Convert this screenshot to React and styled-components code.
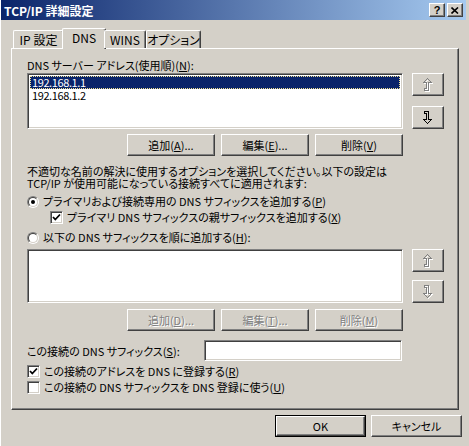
import React from 'react';
import styled, { createGlobalStyle } from 'styled-components';

const GlobalStyle = createGlobalStyle`
    html, body {
        margin: 0;
        padding: 0;
        background: #D4D0C8;
    }
    body {
        font-family: "Noto Sans CJK JP", "Liberation Sans", sans-serif;
        font-size: 11px;
        color: #000;
    }
`;

// 창 전체
const Window = styled.div`
    width: 469px;
    height: 446px;
    box-sizing: border-box;
    background: #D4D0C8;
    display: flex;
    flex-direction: column;
    padding: 0 3px 0 3px;
    border-left: 1px solid #fff;
    overflow: hidden;
    font-feature-settings: "palt";
`;

// 타이틀바
const TitleBar = styled.div`
    height: 20px;
    display: flex;
    align-items: center;
    padding: 0 3px 0 3px;
    margin-left: -3px;
    background: linear-gradient(to right, #0A246A, #A6CAF0);
`;

const TitleText = styled.div`
    flex: 1;
    color: #fff;
    font-weight: bold;
    font-size: 12px;
    line-height: 14px;
    padding-top: 1px;
`;

const CaptionButton = styled.div`
    width: 16px;
    height: 14px;
    box-sizing: border-box;
    margin-left: ${p => p.$ml || 0}px;
    background: #D4D0C8;
    border: 1px solid;
    border-color: #fff #404040 #404040 #fff;
    box-shadow: inset -1px -1px #808080;
    display: flex;
    align-items: center;
    justify-content: center;
    font-family: "Liberation Sans", sans-serif;
    font-weight: bold;
    font-size: 11px;
    line-height: 11px;
`;

const Body = styled.div`
    flex: 1;
    display: flex;
    flex-direction: column;
    padding: 8px 7px 0 7px;
`;

// 탭
const TabStrip = styled.div`
    height: 20px;
    display: flex;
    align-items: flex-end;
    padding-left: 2px;
    position: relative;
    z-index: 1;
`;

const Tab = styled.div`
    width: ${p => p.$w}px;
    height: ${p => (p.$active ? 21 : 18)}px;
    margin: ${p => (p.$active ? '0 -2px -1px -2px' : '0')};
    box-sizing: border-box;
    background: #D4D0C8;
    border-top: 1px solid #fff;
    border-left: 1px solid #fff;
    border-right: 1px solid #404040;
    border-radius: 2px 2px 0 0;
    box-shadow: inset -1px 0 #808080;
    display: flex;
    justify-content: center;
    padding-top: 2px;
    line-height: 13px;
    font-size: 12px;
`;

const Panel = styled.div`
    height: 362px;
    box-sizing: border-box;
    border-top: 1px solid #fff;
    border-left: 1px solid #fff;
    border-right: 1px solid #404040;
    border-bottom: 1px solid #404040;
    box-shadow: inset -1px -1px #808080;
    padding: 10px 0 0 15px;
    display: flex;
    flex-direction: column;
`;

const Text = styled.div`
    line-height: 13px;
    margin-top: ${p => p.$mt || 0}px;
    white-space: nowrap;
`;

const Paragraph = styled.div`
    line-height: 12px;
    margin-top: ${p => p.$mt || 0}px;
    white-space: nowrap;
`;

const ListRow = styled.div`
    display: flex;
    gap: 9px;
    margin-top: ${p => p.$mt || 0}px;
`;

const Sunken = styled.div`
    box-sizing: border-box;
    background: #fff;
    border: 1px solid;
    border-color: #808080 #fff #fff #808080;
    box-shadow: inset 1px 1px #404040, inset -1px -1px #D4D0C8;
`;

const ListBox = styled(Sunken)`
    width: 376px;
    height: ${p => p.$h}px;
    padding: 2px 2px;
`;

const ListItem = styled.div`
    height: 13px;
    line-height: 13px;
    padding-left: 2px;
    letter-spacing: -0.4px;
    box-sizing: border-box;
    background: ${p => (p.$selected ? '#0A246A' : 'transparent')};
    color: ${p => (p.$selected ? '#fff' : '#000')};
    outline: ${p => (p.$selected ? '1px dotted #F0E090' : 'none')};
    outline-offset: -1px;
`;

const ArrowColumn = styled.div`
    display: flex;
    flex-direction: column;
    justify-content: space-between;
`;

const Raised = styled.div`
    box-sizing: border-box;
    background: #D4D0C8;
    border: 1px solid;
    border-color: #fff #404040 #404040 #fff;
    box-shadow: inset -1px -1px #808080;
    display: flex;
    align-items: center;
    justify-content: center;
`;

const ArrowButton = styled(Raised)`
    width: 32px;
    height: 23px;
`;

const ButtonRow = styled.div`
    width: 376px;
    display: flex;
    justify-content: flex-end;
    gap: 6px;
    margin-top: ${p => p.$mt || 0}px;
`;

const PushButton = styled(Raised)`
    width: ${p => p.$w || 88}px;
    height: ${p => p.$h || 22}px;
    line-height: 14px;
    color: ${p => (p.$disabled ? '#808080' : '#000')};
    text-shadow: ${p => (p.$disabled ? '1px 1px 0 #fff' : 'none')};
`;

const DefaultButton = styled.div`
    box-sizing: border-box;
    border: 1px solid #000;
    display: flex;
`;

const OptionRow = styled.div`
    display: flex;
    align-items: center;
    gap: 4px;
    height: 13px;
    line-height: 13px;
    margin-top: ${p => p.$mt || 0}px;
    margin-left: ${p => p.$ml || 0}px;
    white-space: nowrap;
`;

const RadioOuter = styled.span`
    width: 12px;
    height: 12px;
    box-sizing: border-box;
    border-radius: 50%;
    border: 1px solid;
    border-color: #808080 #fff #fff #808080;
    display: flex;
    flex: none;
`;

const RadioInner = styled.span`
    flex: 1;
    border-radius: 50%;
    border: 1px solid;
    border-color: #404040 #D4D0C8 #D4D0C8 #404040;
    background: #fff;
    display: flex;
    align-items: center;
    justify-content: center;
`;

const RadioDot = styled.span`
    width: 4px;
    height: 4px;
    border-radius: 50%;
    background: #000;
`;

const CheckBox = styled(Sunken)`
    width: 13px;
    height: 13px;
    flex: none;
    display: flex;
    align-items: center;
    justify-content: center;
`;

const SuffixRow = styled.div`
    display: flex;
    align-items: center;
    margin-top: ${p => p.$mt || 0}px;
`;

const SuffixLabel = styled.div`
    width: 177px;
    white-space: nowrap;
`;

const TextField = styled(Sunken)`
    width: 198px;
    height: 21px;
`;

const Footer = styled.div`
    display: flex;
    justify-content: flex-end;
    gap: 5px;
    margin-top: 5px;
    margin-right: -3px;
`;

function Acc({ k }) {
    return <>(<u>{k}</u>)</>;
}

function UpArrow({ disabled }) {
    const c = disabled ? '#808080' : '#000';
    const pts = '5.5,0.5 9.5,4.5 6.5,4.5 6.5,12.5 2.5,12.5 2.5,10.5 4.5,10.5 4.5,4.5 1.5,4.5';
    return (
        <svg width="12" height="14" viewBox="0 0 12 14" shapeRendering="crispEdges">
            {disabled && <polygon points={pts} fill="none" stroke="#fff" transform="translate(1,1)" />}
            <polygon points={pts} fill="none" stroke={c} />
        </svg>
    );
}

function DownArrow({ disabled }) {
    const c = disabled ? '#808080' : '#000';
    const pts = '5.5,12.5 9.5,8.5 6.5,8.5 6.5,0.5 2.5,0.5 2.5,2.5 4.5,2.5 4.5,8.5 1.5,8.5';
    return (
        <svg width="12" height="14" viewBox="0 0 12 14" shapeRendering="crispEdges">
            {disabled && <polygon points={pts} fill="none" stroke="#fff" transform="translate(1,1)" />}
            <polygon points={pts} fill="none" stroke={c} />
        </svg>
    );
}

function Check() {
    return (
        <svg width="9" height="9" viewBox="0 0 9 9">
            <path d="M1 4 L3.3 6.5 L8 1.5" fill="none" stroke="#000" strokeWidth="1.8" />
        </svg>
    );
}

function Radio({ checked }) {
    return (
        <RadioOuter>
            <RadioInner>{checked && <RadioDot />}</RadioInner>
        </RadioOuter>
    );
}

export default function App() {
    return (
        <>
            <GlobalStyle />
            <Window>
                <TitleBar>
                    <TitleText>TCP/IP 詳細設定</TitleText>
                    <CaptionButton>?</CaptionButton>
                    <CaptionButton $ml={2}>
                        <svg width="8" height="7" viewBox="0 0 8 7">
                            <path d="M0.5 0.5 L7 6.5 M7 0.5 L0.5 6.5" stroke="#000" strokeWidth="1.6" />
                        </svg>
                    </CaptionButton>
                </TitleBar>
                <Body>
                    <TabStrip>
                        <Tab $w={51}>IP 設定</Tab>
                        <Tab $w={44} $active>DNS</Tab>
                        <Tab $w={42}>WINS</Tab>
                        <Tab $w={55}>オプション</Tab>
                    </TabStrip>
                    <Panel>
                        <Text>DNS サーバー アドレス(使用順)<Acc k="N" />:</Text>
                        <ListRow $mt={1}>
                            <ListBox $h={56}>
                                <ListItem $selected>192.168.1.1</ListItem>
                                <ListItem>192.168.1.2</ListItem>
                            </ListBox>
                            <ArrowColumn>
                                <ArrowButton><UpArrow disabled /></ArrowButton>
                                <ArrowButton><DownArrow /></ArrowButton>
                            </ArrowColumn>
                        </ListRow>
                        <ButtonRow $mt={5}>
                            <PushButton>追加<Acc k="A" />...</PushButton>
                            <PushButton>編集<Acc k="E" />...</PushButton>
                            <PushButton>削除<Acc k="V" /></PushButton>
                        </ButtonRow>
                        <Paragraph $mt={9}>
                            不適切な名前の解決に使用するオプションを選択してください。以下の設定は<br />
                            TCP/IP が使用可能になっている接続すべてに適用されます:
                        </Paragraph>
                        <OptionRow $mt={6}>
                            <Radio checked />
                            <span>プライマリおよび接続専用の DNS サフィックスを追加する<Acc k="P" /></span>
                        </OptionRow>
                        <OptionRow $mt={3} $ml={23}>
                            <CheckBox><Check /></CheckBox>
                            <span>プライマリ DNS サフィックスの親サフィックスを追加する<Acc k="X" /></span>
                        </OptionRow>
                        <OptionRow $mt={7}>
                            <Radio />
                            <span>以下の DNS サフィックスを順に追加する<Acc k="H" />:</span>
                        </OptionRow>
                        <ListRow $mt={5}>
                            <ListBox $h={54} />
                            <ArrowColumn>
                                <ArrowButton><UpArrow disabled /></ArrowButton>
                                <ArrowButton><DownArrow disabled /></ArrowButton>
                            </ArrowColumn>
                        </ListRow>
                        <ButtonRow $mt={6}>
                            <PushButton $disabled>追加<Acc k="D" />...</PushButton>
                            <PushButton $disabled>編集<Acc k="T" />...</PushButton>
                            <PushButton $disabled>削除<Acc k="M" /></PushButton>
                        </ButtonRow>
                        <SuffixRow $mt={9}>
                            <SuffixLabel>この接続の DNS サフィックス<Acc k="S" />:</SuffixLabel>
                            <TextField />
                        </SuffixRow>
                        <OptionRow $mt={4}>
                            <CheckBox><Check /></CheckBox>
                            <span>この接続のアドレスを DNS に登録する<Acc k="R" /></span>
                        </OptionRow>
                        <OptionRow $mt={3}>
                            <CheckBox />
                            <span>この接続の DNS サフィックスを DNS 登録に使う<Acc k="U" /></span>
                        </OptionRow>
                    </Panel>
                    <Footer>
                        <DefaultButton>
                            <PushButton $w={89} $h={20}>OK</PushButton>
                        </DefaultButton>
                        <PushButton $w={91}>キャンセル</PushButton>
                    </Footer>
                </Body>
            </Window>
        </>
    );
}
